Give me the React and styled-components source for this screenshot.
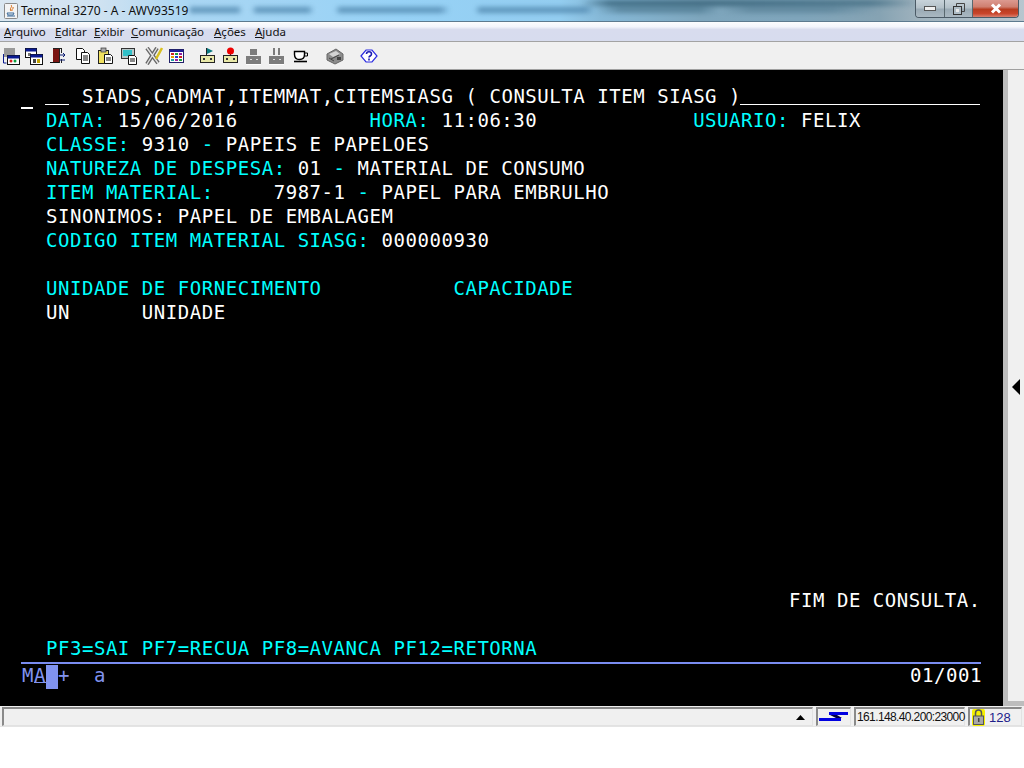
import React from "react";
import styled, { createGlobalStyle } from "styled-components";

const Global = createGlobalStyle`
  html, body { margin: 0; padding: 0; background: #fff; }
  body { font-family: "Noto Sans", "Liberation Sans", sans-serif; }
`;

const Window = styled.div`
  width: 1024px;
  height: 768px;
  display: flex;
  flex-direction: column;
  background: #fff;
  overflow: hidden;
`;

const TitleBar = styled.div`
  position: relative;
  height: 21px;
  flex: none;
  display: flex;
  align-items: center;
  padding-left: 4px;
  gap: 3px;
  overflow: hidden;
  border-bottom: 1px solid #5d7a8e;
  background: linear-gradient(90deg, #dbe7f1 0, #cfe2f1 100px, #a9d6f3 190px, #97d2f6 400px, #93cdf0 560px, #86b9d8 600px, #7ea6bd 700px, #7fa5bb 800px, #86a3b3 880px, #9fb2bd 918px, #b8c6cf 1024px);
`;

const TitleText = styled.span`
  font-size: 12px;
  color: #101010;
  white-space: nowrap;
  position: relative;
`;

// what shows through the glass frame, out of focus
const GlassBlur = styled.div`
  position: absolute;
  left: 190px;
  top: 0;
  width: 730px;
  height: 21px;
  filter: blur(2.5px);
  background:
    linear-gradient(90deg, #4f86ad 0, #4f86ad 48px, transparent 52px, transparent 62px, #4f86ad 66px, #4f86ad 118px, transparent 124px, transparent 145px, #4f86ad 150px, #4f86ad 250px, transparent 260px, transparent 285px, #4f86ad 290px, #4f86ad 395px, transparent 405px, #4f7b92 430px, #4f7b92 510px, transparent 530px, #5a8298 560px, #5a8298 640px, transparent 690px) 0 7px / 100% 6px no-repeat,
    linear-gradient(90deg, transparent 390px, #2f5a70 420px, #2f5a70 520px, #3f6a80 680px, transparent 730px) 0 0 / 100% 6px no-repeat;
  opacity: 0.8;
`;

const WinButtons = styled.div`
  position: absolute;
  right: 5px;
  top: 0;
  display: flex;
  height: 17px;
  border: 1px solid #4b5a66;
  border-top: 0;
  border-radius: 0 0 4px 4px;
  overflow: hidden;
`;

const WinButton = styled.div`
  width: ${p => p.$w}px;
  display: flex;
  align-items: center;
  justify-content: center;
  border-left: ${p => (p.$first ? "0" : "1px solid #59686f")};
  background: ${p =>
    p.$close
      ? "linear-gradient(180deg, #dc9a90 0, #cf7f70 40%, #b83c20 55%, #c9452a 80%, #d98070 100%)"
      : "linear-gradient(180deg, #c8d3da 0, #b4c1c9 45%, #9aaab5 55%, #aab8c1 100%)"};
`;

const MenuBar = styled.div`
  height: 20px;
  flex: none;
  display: flex;
  align-items: center;
  padding-left: 4px;
  box-sizing: border-box;
  border-bottom: 1px solid #a3a3a3;
  background: linear-gradient(180deg, #fcfdfe 0, #f3f5fb 25%, #d8dcee 40%, #d7dcee 100%);
`;

const MenuItem = styled.span`
  width: ${p => p.$w}px;
  font-family: "Noto Sans", sans-serif;
  font-size: 11.5px;
  color: #111;
  white-space: nowrap;
  u { text-underline-offset: 1px; }
`;

const ToolBar = styled.div`
  height: 27px;
  flex: none;
  display: flex;
  align-items: center;
  padding-left: 2px;
  background: #f0f0f0;
  border-bottom: 1px solid #a0a0a0;
`;

const Tool = styled.svg`
  width: 18px;
  height: 18px;
  flex: none;
  margin-left: ${p => p.$gap || 0}px;
`;

const Main = styled.div`
  height: 636px;
  flex: none;
  display: flex;
  background: #bdbdbd;
`;

const Screen = styled.div`
  position: relative;
  width: 982px;
  padding: 14px 0 0 21px;
  background: #000;
  font-family: "DejaVu Sans Mono", "Liberation Mono", monospace;
  font-size: 19px;
  letter-spacing: 0.545px;
`;

const Row = styled.div`
  height: 24px;
  line-height: 24px;
  padding-left: 1px;
  white-space: pre;
  color: #fff;
`;

const Cyan = styled.span`
  color: #00ffff;
`;

const Underscores = styled.span`
  display: inline-block;
  box-sizing: border-box;
  vertical-align: top;
  width: ${p => p.$w}px;
  height: 21px;
  margin-left: -1px;
  margin-right: 1px;
  border-bottom: 1px solid #fff;
`;

const Cursor = styled.div`
  position: absolute;
  left: 21px;
  top: 37px;
  width: 12px;
  height: 2px;
  background: #fff;
`;

const Rule = styled.div`
  width: 960px;
  height: 2px;
  margin-top: 2px;
  background: #7a8cf0;
`;

const Oia = styled.div`
  width: 960px;
  height: 24px;
  padding-left: 1px;
  display: flex;
  justify-content: space-between;
  line-height: 23px;
  white-space: pre;
  color: #8093f0;
`;

const OiaLeft = styled.div`
  display: flex;
`;

const OiaMark = styled.span`
  width: 12px;
  box-sizing: border-box;
  height: 19px;
  border-bottom: ${p => (p.$under ? "1px solid #8093f0" : "0")};
`;

const OiaCell = styled.span`
  width: 12px;
  height: 24px;
  margin-top: 1px;
  background: #8093f0;
`;

const OiaCount = styled.span`
  color: #fff;
`;

const Divider = styled.div`
  width: 5px;
  background: #bdbdbd;
`;

const SidePanel = styled.div`
  flex: 1;
  display: flex;
  align-items: center;
  background: #f0f0f0;
  padding-left: 4px;
  margin-bottom: 5px;
  &::before {
    content: "";
    border-style: solid;
    border-width: 8px 8px 8px 0;
    border-color: transparent #000 transparent transparent;
    margin-top: 2px;
  }
`;

const StatusBar = styled.div`
  height: 21px;
  flex: none;
  display: flex;
  gap: 3px;
  padding: 1px 2px 0;
  box-sizing: border-box;
  background: #f0f0f0;
  border-bottom: 1px solid #e4e4e4;
`;

const Panel = styled.div`
  box-sizing: border-box;
  height: 19px;
  width: ${p => p.$w}px;
  display: flex;
  align-items: center;
  justify-content: ${p => p.$justify || "flex-start"};
  gap: ${p => p.$gap || 0}px;
  padding: 0 ${p => p.$pad || 0}px;
  border-top: 2px solid #8a8a8a;
  border-left: 2px solid #8a8a8a;
  border-right: 1px solid #e2e2e2;
  border-bottom: 1px solid #e2e2e2;
  font-family: "Liberation Sans", Arial, sans-serif;
  font-size: ${p => p.$size || 12}px;
  letter-spacing: ${p => p.$track || 0}px;
  color: ${p => p.$color || "#111"};
  white-space: nowrap;
`;

const Screenful = [
  null,
  [["c", "  DATA:"], ["", " 15/06/2016"], ["", "           "], ["c", "HORA:"], ["", " 11:06:30"], ["", "             "], ["c", "USUARIO:"], ["", " FELIX"]],
  [["c", "  CLASSE:"], ["", " 9310 "], ["c", "-"], ["", " PAPEIS E PAPELOES"]],
  [["c", "  NATUREZA DE DESPESA:"], ["", " 01 "], ["c", "-"], ["", " MATERIAL DE CONSUMO"]],
  [["c", "  ITEM MATERIAL:"], ["", "     7987-1 "], ["c", "-"], ["", " PAPEL PARA EMBRULHO"]],
  [["", "  SINONIMOS: PAPEL DE EMBALAGEM"]],
  [["c", "  CODIGO ITEM MATERIAL SIASG:"], ["", " 000000930"]],
  [],
  [["c", "  UNIDADE DE FORNECIMENTO           CAPACIDADE"]],
  [["", "  UN      UNIDADE"]],
  [], [], [], [], [], [], [], [], [], [], [],
  [["", " ".repeat(64) + "FIM DE CONSULTA."]],
  [],
  [["c", "  PF3=SAI PF7=RECUA PF8=AVANCA PF12=RETORNA"]]
];

const Door = () => (
  <>
    <rect x="4" y="1" width="6" height="14" fill="#7a1512" />
    <rect x="4" y="1" width="9" height="1" fill="#222" />
    <rect x="12" y="1" width="1" height="5" fill="#222" />
    <rect x="12" y="12" width="1" height="4" fill="#222" />
    <rect x="1" y="15" width="9" height="1" fill="#111" />
    <rect x="10" y="1" width="1" height="15" fill="#222" />
    <path d="M11 8h5M14 6l2 2-2 2M11 13h5" stroke="#0a1a70" fill="none" />
  </>
);

const MiniWin = ({ x, y, w = 10, h = 9, bar = "#0a1a90" }) => (
  <>
    <rect x={x} y={y} width={w} height={h} fill="#fff" stroke="#111" strokeWidth="1" />
    <rect x={x} y={y} width={w} height="3" fill={bar} />
  </>
);

const Pages = () => (
  <>
    <path d="M2.5 1.5h6l2 2v9h-8z" fill="#fff" stroke="#111" />
    <path d="M7.5 5.5h6l2 2v9h-8z" fill="#fff" stroke="#111" />
    <path d="M9 9h5M9 11h5M9 13h5" stroke="#111" />
  </>
);

const Socket = ({ children, color = "#e8e8a8" }) => (
  <>
    {children}
    <rect x="1.5" y="8.5" width="14" height="7" fill={color} stroke="#222" />
    <rect x="4" y="11" width="2" height="2" fill="#333" />
    <rect x="11" y="11" width="2" height="2" fill="#333" />
  </>
);

const GreySocket = ({ children }) => (
  <>
    {children}
    <rect x="1" y="9" width="15" height="8" fill="#7c7c7c" />
    <rect x="1" y="17" width="15" height="1" fill="#fff" />
    <rect x="5" y="12" width="2" height="1" fill="#ddd" />
    <rect x="11" y="12" width="2" height="1" fill="#ddd" />
  </>
);

const tools = [
  {
    gap: 0,
    body: (
      <>
        <rect x="2" y="1" width="11" height="9" fill="#9a9a9a" />
        <path d="M1.5 7v9h3" stroke="#0a1a90" fill="none" />
        <MiniWin x={5.5} y={8.5} w={12} h={9} />
        <circle cx="9" cy="14" r="1.5" fill="#d82020" />
        <circle cx="13" cy="14" r="1.5" fill="#10a040" />
      </>
    )
  },
  {
    gap: 5,
    body: (
      <>
        <MiniWin x={0.5} y={1.5} w={11} h={9} />
        <rect x="3" y="6" width="3" height="3" fill="#777" />
        <MiniWin x={5.5} y={7.5} w={12} h={10} />
        <rect x="8" y="12" width="3" height="4" fill="#444" />
        <rect x="12" y="12" width="3" height="4" fill="#c0a000" />
      </>
    )
  },
  { gap: 6, body: <Door /> },
  { gap: 7, body: <Pages /> },
  {
    gap: 5,
    body: (
      <>
        <rect x="1.5" y="3.5" width="10" height="13" fill="#f0e060" stroke="#222" />
        <rect x="4" y="1" width="5" height="4" fill="#aaa" stroke="#333" strokeWidth="0.7" />
        <path d="M7.5 7.5h6l2 2v7h-8z" fill="#fff" stroke="#111" />
        <path d="M9 11h5M9 13h5" stroke="#111" />
      </>
    )
  },
  {
    gap: 5,
    body: (
      <>
        <rect x="1.5" y="1.5" width="13" height="10" fill="#b8c8c8" stroke="#333" />
        <rect x="3" y="3" width="9" height="6" fill="#30c0c8" />
        <path d="M8.5 8.5h6l2 2v7h-8z" fill="#fff" stroke="#111" />
        <path d="M10 12h5M10 14h5" stroke="#111" />
      </>
    )
  },
  {
    gap: 7,
    body: (
      <>
        <path d="M2 1l11 15M12 1L2 17" stroke="#666" strokeWidth="4" />
        <path d="M2 1l11 15M12 1L2 17" stroke="#e4e4e4" strokeWidth="1.4" />
        <path d="M17 1l-6 11" stroke="#d8c020" strokeWidth="2.5" />
      </>
    )
  },
  {
    gap: 5,
    body: (
      <>
        <rect x="1.5" y="2.5" width="14" height="13" fill="#fff" stroke="#20206a" />
        <rect x="2" y="3" width="13" height="2" fill="#20209a" />
        <rect x="3" y="6" width="3" height="2" fill="#d02020" />
        <rect x="7" y="6" width="3" height="2" fill="#20a040" />
        <rect x="11" y="6" width="3" height="2" fill="#9020a0" />
        <rect x="3" y="9" width="3" height="2" fill="#e0a000" />
        <rect x="7" y="9" width="3" height="2" fill="#2040d0" />
        <rect x="11" y="9" width="3" height="2" fill="#d02020" />
        <rect x="3" y="12" width="3" height="2" fill="#20a0a0" />
        <rect x="7" y="12" width="3" height="2" fill="#a020a0" />
        <rect x="11" y="12" width="3" height="2" fill="#20a040" />
      </>
    )
  },
  {
    gap: 13,
    body: (
      <Socket>
        <rect x="7" y="1" width="1" height="8" fill="#222" />
        <path d="M8 1l6 3-6 3z" fill="#0a7a80" />
      </Socket>
    )
  },
  {
    gap: 5,
    body: (
      <Socket>
        <rect x="8" y="6" width="1" height="3" fill="#222" />
        <circle cx="8.5" cy="4" r="3.5" fill="#ee0000" />
      </Socket>
    )
  },
  {
    gap: 5,
    body: (
      <GreySocket>
        <rect x="5" y="2" width="7" height="6" fill="#7c7c7c" />
      </GreySocket>
    )
  },
  {
    gap: 5,
    body: (
      <GreySocket>
        <rect x="5" y="1" width="2" height="7" fill="#7c7c7c" />
        <rect x="10" y="1" width="2" height="7" fill="#7c7c7c" />
      </GreySocket>
    )
  },
  {
    gap: 7,
    body: (
      <>
        <path d="M1.5 4.5h10v3c0 3-2 5-5 5s-5-2-5-5z" fill="#fff" stroke="#000" strokeWidth="1.4" />
        <path d="M11.5 6h3v3h-3" fill="none" stroke="#000" />
        <path d="M1 14.5h13" stroke="#000" strokeWidth="1.6" />
      </>
    )
  },
  {
    gap: 15,
    body: (
      <>
        <path d="M1 7l9-5 7 5v6l-8 4-8-4z" fill="#8c8c8c" stroke="#666" />
        <path d="M3 7l7-3 4 3-7 3z" fill="#d4d4d4" />
        <path d="M3 11l5 3M5 12l8-4" stroke="#444" />
        <rect x="11" y="10" width="4" height="3" fill="#444" />
      </>
    )
  },
  {
    gap: 16,
    body: (
      <>
        <path d="M1 9l5-6h6l5 6-5 6H6z" fill="#fff" stroke="#2a2ae0" strokeWidth="1.2" />
        <path d="M6.5 7c0-3 5-3 5 0 0 2-2.500 2-2.500 3.500M9 11.500v2" fill="none" stroke="#1a1ab0" strokeWidth="1.6" />
      </>
    )
  }
];

const menus = [
  { key: "A", rest: "rquivo", w: 51 },
  { key: "E", rest: "ditar", w: 39 },
  { key: "E", rest: "xibir", w: 37 },
  { key: "C", rest: "omunicação", w: 83 },
  { key: "A", rest: "ções", w: 41 },
  { key: "A", rest: "juda", w: 40 }
];

export default function App() {
  return (
    <Window>
      <Global />
      <TitleBar>
        <GlassBlur />
        <svg width="14" height="16" viewBox="0 0 14 16" style={{ position: "relative" }}>
          <rect x="0.5" y="0.5" width="13" height="15" rx="1" fill="#f4f4f4" stroke="#8a8a8a" />
          <path d="M7 2c2 2-2 3 0 6M9 4c1 2-2 2-1 4" stroke="#d86a10" fill="none" />
          <path d="M3 10h7l-1 2H4zM3 13h8" stroke="#3a6a9a" fill="none" />
        </svg>
        <TitleText>Terminal 3270 - A - AWV93519</TitleText>
        <WinButtons>
          <WinButton $w={28} $first>
            <svg width="12" height="5"><rect x="0.500" y="0.500" width="11" height="4" fill="#f0f0f0" stroke="#555" /></svg>
          </WinButton>
          <WinButton $w={27}>
            <svg width="12" height="12"><path d="M3.500 .5h8v8h-8z" fill="none" stroke="#444" /><rect x="0.500" y="3.500" width="8" height="8" fill="#aebcc5" stroke="#333" /><rect x="3" y="6" width="3" height="3" fill="#e8e8e8" /></svg>
          </WinButton>
          <WinButton $w={45} $close>
            <svg width="12" height="11"><path d="M2 1.500l8 8M10 1.500l-8 8" stroke="#fff" strokeWidth="3" /></svg>
          </WinButton>
        </WinButtons>
      </TitleBar>

      <MenuBar>
        {menus.map(m => (
          <MenuItem key={m.rest} $w={m.w}>
            <u>{m.key}</u>{m.rest}
          </MenuItem>
        ))}
      </MenuBar>

      <ToolBar>
        {tools.map((t, i) => (
          <Tool key={i} $gap={t.gap} viewBox="0 0 18 18">{t.body}</Tool>
        ))}
      </ToolBar>

      <Main>
        <Screen>
          <Cursor />
          {Screenful.map((segments, i) =>
            segments === null ? (
              <Row key={i}>
                {"  "}
                <Underscores $w={24} />
                {" SIADS,CADMAT,ITEMMAT,CITEMSIASG ( CONSULTA ITEM SIASG )"}
                <Underscores $w={240} />
              </Row>
            ) : (
              <Row key={i}>
                {segments.map(([kind, text], j) =>
                  kind === "c" ? <Cyan key={j}>{text}</Cyan> : <span key={j}>{text}</span>
                )}
              </Row>
            )
          )}
          <Rule />
          <Oia>
            <OiaLeft>
              <OiaMark>M</OiaMark>
              <OiaMark $under>A</OiaMark>
              <OiaCell />
              <OiaMark>+</OiaMark>
              <span>{"  a"}</span>
            </OiaLeft>
            <OiaCount>01/001</OiaCount>
          </Oia>
        </Screen>
        <Divider />
        <SidePanel />
      </Main>

      <StatusBar>
        <Panel $w={811} $justify="flex-end" $pad={7}>
          <svg width="9" height="5"><path d="M0 5l4.500-5 4.500 5z" fill="#000" /></svg>
        </Panel>
        <Panel $w={35} $justify="center">
          <svg width="30" height="10" viewBox="0 0 30 10">
            <path d="M0 6h22v3H0zM10 0h19v3H10z" fill="#0000e0" />
            <path d="M11 3h7l5 3h-6z" fill="#000040" />
          </svg>
        </Panel>
        <Panel $w={111} $pad={1} $track={-0.62}>161.148.40.200:23000</Panel>
        <Panel $w={54} $gap={4} $pad={2} $size={13} $color="#20208a">
          <svg width="13" height="17" viewBox="0 0 13 17">
            <rect x="0" y="0" width="13" height="17" rx="2" fill="#f5f000" />
            <path d="M3.500 7V4a3 3 0 0 1 6 0v3" fill="none" stroke="#555" strokeWidth="1.500" />
            <rect x="1.500" y="7" width="10" height="8.500" fill="#a8a8a8" stroke="#555" />
            <rect x="6" y="9" width="1.500" height="4" fill="#444" />
          </svg>
          128
        </Panel>
      </StatusBar>
    </Window>
  );
}
